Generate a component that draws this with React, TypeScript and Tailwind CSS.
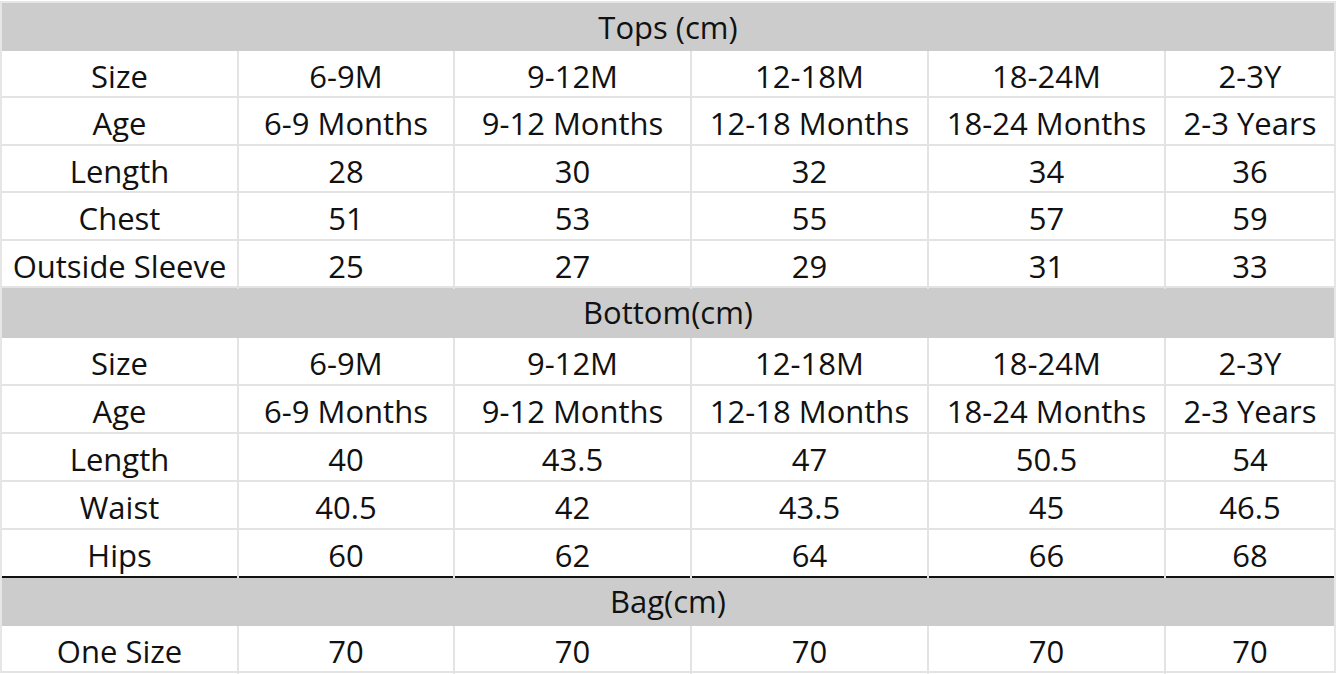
const sizes = ['6-9M', '9-12M', '12-18M', '18-24M', '2-3Y'];
const ages = ['6-9 Months', '9-12 Months', '12-18 Months', '18-24 Months', '2-3 Years'];

type Row = { label: string; values: string[] };

const tops: Row[] = [
    { label: 'Size', values: sizes },
    { label: 'Age', values: ages },
    { label: 'Length', values: ['28', '30', '32', '34', '36'] },
    { label: 'Chest', values: ['51', '53', '55', '57', '59'] },
    { label: 'Outside Sleeve', values: ['25', '27', '29', '31', '33'] },
];

const bottoms: Row[] = [
    { label: 'Size', values: sizes },
    { label: 'Age', values: ages },
    { label: 'Length', values: ['40', '43.5', '47', '50.5', '54'] },
    { label: 'Waist', values: ['40.5', '42', '43.5', '45', '46.5'] },
    { label: 'Hips', values: ['60', '62', '64', '66', '68'] },
];

function SectionHeader({ title, tall }: { title: string; tall?: boolean }) {
    return (
        <div className={(tall ? 'h-[50px]' : 'h-[48px]') + ' bg-[#cccccc] flex items-center justify-center'}>
            <span className="leading-none">{title}</span>
        </div>
    );
}

function DataRow({ row, last, h }: { row: Row; last?: boolean; h: string }) {
    const cells = [row.label, ...row.values];
    return (
        <div
            className={
                'grid grid-cols-[237px_216px_237px_237px_237px_1fr] border-b-2 ' +
                h +
                ' ' +
                (last ? 'border-[#111111]' : 'border-[#e3e3e3]')
            }
        >
            {cells.map((c, i) => (
                <div
                    key={i}
                    className={
                        'flex items-center justify-center whitespace-nowrap pt-[2px] ' +
                        (i < cells.length - 1 ? 'border-r-2 border-[#e3e3e3]' : '')
                    }
                >
                    {c}
                </div>
            ))}
        </div>
    );
}

export default function App() {
    return (
        <div className="w-[1337px] h-[674px] bg-white overflow-hidden pt-[1px]">
            <div className="w-[1336px] border-x-2 border-t-2 border-[#e6e6e6] text-[31px] text-[#111111] font-['Open_Sans',sans-serif]">
                <SectionHeader title="Tops (cm)" />
                {tops.map((r) => (
                    <DataRow key={'t' + r.label} row={r} h="h-[47.4px]" />
                ))}
                <SectionHeader title="Bottom(cm)" tall />
                {bottoms.map((r, i) => (
                    <DataRow key={'b' + r.label} row={r} h="h-[48px]" last={i === bottoms.length - 1} />
                ))}
                <SectionHeader title="Bag(cm)" />
                <DataRow row={{ label: 'One Size', values: ['70', '70', '70', '70', '70'] }} h="h-[47px]" />
            </div>
        </div>
    );
}
